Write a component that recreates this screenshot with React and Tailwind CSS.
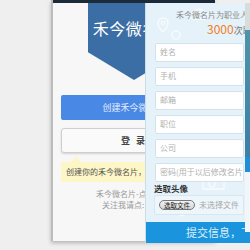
const CJK = "font-['Noto_Sans_CJK_SC','Noto_Sans',sans-serif]";

const FIELDS = ["姓名", "手机", "邮箱", "职位", "公司", "密码(用于以后修改名片信息)"];

function Field({ label }) {
  return (
    <div className="ml-[9px] w-[89px] h-[19px] shrink-0 flex items-center pl-[4px] bg-white border border-[#d3e2ec] rounded-[2px] text-[8px] text-[#b0b0b0] whitespace-nowrap overflow-hidden">
      {label}
    </div>
  );
}

// faint white doodles behind the form
function Doodles() {
  return (
    <svg className="absolute inset-0" width="100" height="241" fill="none" stroke="#ffffff" strokeWidth="1.4" opacity="0.7">
      <path d="M12 20 a5 5 0 1 1 10 0 c0 4 -5 9 -5 9 s-5 -5 -5 -9z" />
      <circle cx="17" cy="20" r="1.6" />
      <path d="M48 10 c2 -5 9 -5 10 0 c4 0 5 5 1 6 h-12 c-4 -1 -3 -6 1 -6z" />
      <circle cx="30" cy="32" r="4" />
      <path d="M57 176 h10 l2 -2 h4 l2 2 h3 v10 h-21z" />
      <circle cx="66" cy="181" r="3" />
      <path d="M28 209 l6 -3 l8 4 l-6 3z" />
    </svg>
  );
}

export default function App() {
  return (
    <div className={`relative w-[250px] h-[250px] overflow-hidden bg-[#efefef] ${CJK}`}>
      {/* main card */}
      <div className="ml-[51px] w-[164px] h-[241px] flex flex-col bg-[#f7f7f7] border-l-[2px] border-[#bcbcbc] shadow-[0_2px_4px_rgba(0,0,0,0.25)]">
        <div className="h-[3px] shrink-0 bg-[#1d2a3a]" />
        <div className="ml-[35px] w-[92px] h-[77px] shrink-0 bg-[#3b6ea4] [clip-path:polygon(0_0,100%_0,100%_64%,50%_100%,0_64%)] flex justify-center pt-[15px]">
          <span className="text-[16px] leading-[20px] tracking-[0.5px] text-white whitespace-nowrap">禾今微名片</span>
        </div>
        <div className="mx-[8px] mt-[15px] h-[25px] shrink-0 rounded-[2px] bg-[#4a88e6] flex items-center justify-center text-[9px] text-[#e6eefc]">
          创建禾今微名片
        </div>
        <div className="mx-[8px] mt-[8px] h-[25px] shrink-0 rounded-[3px] bg-[#fafafa] border border-[#cfcfcf] shadow-[0_1px_2px_rgba(0,0,0,0.15)] flex items-center justify-center text-[9px] font-bold text-[#444] tracking-[2px]">
          登 录
        </div>
        <div className="relative mx-[8px] mt-[9px] h-[20px] shrink-0 bg-[#fdf6c6] flex items-center pl-[5px] text-[8px] text-[#555] whitespace-nowrap overflow-hidden">
          创建你的禾今微名片，提高职业形象
        </div>
        <div className="ml-[43px] mt-[6px] text-[8px] leading-[11px] text-[#9a9a9a] whitespace-nowrap">
          禾今微名片-点亮职业形象
        </div>
        <div className="ml-[49px] text-[8px] leading-[11px] text-[#9a9a9a] whitespace-nowrap">
          关注我请点: <span className="text-[#3a8ad8]">微信</span>
        </div>
      </div>
      {/* tooltip arrow */}
      <div className="absolute left-[71px] top-[156px] w-0 h-0 border-x-[5px] border-x-transparent border-b-[6px] border-b-[#fdf6c6]" />

      {/* right edge strip from the layer behind */}
      <div className="absolute left-[245px] top-[3px] w-[5px] h-[240px] flex flex-col">
        <div className="h-[27px] bg-[#d9dcdd]" />
        <div className="h-[127px] bg-gradient-to-b from-[#4f93a8] to-[#3d7fa6]" />
        <div className="h-[15px] bg-[#1f8fd8]" />
        <div className="h-[60px] bg-[#f2f6f8]" />
        <div className="flex-1 bg-[#1a94dc]" />
      </div>

      {/* sign-up overlay */}
      <div className="absolute left-[145px] top-[3px] w-[100px] h-[240px] bg-[#e5f2fa] border-l border-[#cddde8] overflow-hidden flex flex-col">
        <Doodles />
        <div className="relative flex flex-col h-full">
          <div className="pl-[30px] pt-[7px] text-[8px] leading-[10px] text-[#8a8a8a] whitespace-nowrap">
            禾今微名片为职业人士提供
          </div>
          <div className="pl-[61px] mt-[2px] flex items-baseline whitespace-nowrap">
            <span className="text-[12px] leading-[14px] text-[#f07d23]">3000</span>
            <span className="text-[9px] text-[#777]">次职业形象</span>
          </div>
          <div className="mt-[5px] flex flex-col gap-[5px]">
            {FIELDS.map((f) => (
              <Field key={f} label={f} />
            ))}
          </div>
          <div className="ml-[8px] mt-[1px] text-[8.5px] leading-[11px] font-bold text-[#333]">选取头像</div>
          <div className="ml-[8px] mt-[1px] w-[90px] h-[20px] bg-[#edf6fb] border border-[#d8e6ef] rounded-[2px] flex items-center pl-[4px] gap-[4px] whitespace-nowrap">
            <span className="h-[10px] px-[4px] rounded-full border border-[#777] bg-gradient-to-b from-[#f4f4f4] to-[#d4d4d4] text-[6.5px] leading-[8px] text-[#222]">选取文件</span>
            <span className="text-[8px] text-[#a8a8a8]">未选择文件</span>
          </div>
          <div className="mt-auto h-[21px] bg-[#1a94dc] flex items-center pl-[40px] text-[11px] text-[#dff0fb] whitespace-nowrap">
            提交信息，下一步
          </div>
        </div>
      </div>
    </div>
  );
}
